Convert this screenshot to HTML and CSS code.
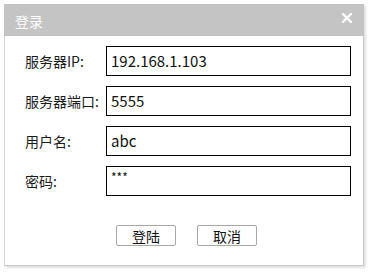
FILE: index.html
```
<!DOCTYPE html>
<html lang="zh-CN">
<head>
<meta charset="utf-8">
<title>登录</title>
<link rel="stylesheet" href="styles.css">
</head>
<body>
<div class="window">
  <div class="titlebar">
    <span class="title">登录</span>
    <span class="close" aria-label="关闭">
      <svg width="10" height="10" viewBox="0 0 10 10"><path d="M1 1 L9 9 M9 1 L1 9" stroke="#ffffff" stroke-width="2.4" stroke-linecap="square"/></svg>
    </span>
  </div>
  <div class="content">
    <div class="form">
      <div class="row"><label class="label">服务器IP:</label><div class="field">192.168.1.103</div></div>
      <div class="row"><label class="label">服务器端口:</label><div class="field">5555</div></div>
      <div class="row"><label class="label">用户名:</label><div class="field">abc</div></div>
      <div class="row"><label class="label">密码:</label><div class="field pwd">***</div></div>
    </div>
    <div class="buttons">
      <button class="btn">登陆</button>
      <button class="btn">取消</button>
    </div>
  </div>
</div>
</body>
</html>
```
FILE: styles.css
```
html, body {
  margin: 0;
  padding: 0;
  background: #ffffff;
  font-family: "Noto Sans CJK SC", "Noto Sans", sans-serif;
}
body {
  padding: 4px 0 0 4px;
  width: 372px;
  height: 272px;
  box-sizing: border-box;
}
.window {
  width: 360px;
  height: 262px;
  box-sizing: border-box;
  border-left: 1px solid #d4d4d4;
  border-right: 1px solid #c8c8c8;
  border-bottom: 1px solid #c8c8c8;
  box-shadow: 2px 2px 2px rgba(0,0,0,0.12);
  background: #ffffff;
  display: flex;
  flex-direction: column;
}
.titlebar {
  height: 32px;
  background: #c4c4c4;
  display: flex;
  align-items: center;
  justify-content: space-between;
  padding: 0 12px 0 11px;
  flex-shrink: 0;
  margin-left: -1px;
  margin-right: -1px;
}
.title {
  color: #ffffff;
  font-size: 14px;
  line-height: 14px;
  margin-top: 1px;
}
.close {
  display: flex;
  width: 10px;
  height: 10px;
  margin-top: -4px;
}
.content {
  padding: 10px 0 0 20px;
}
.form {
  display: flex;
  flex-direction: column;
  gap: 10px;
}
.row {
  display: flex;
  align-items: center;
  height: 30px;
}
.label {
  width: 81px;
  flex-shrink: 0;
  font-size: 14px;
  color: #1a1a1a;
  white-space: nowrap;
}
.field {
  width: 245px;
  height: 30px;
  box-sizing: border-box;
  border: 1px solid #000000;
  font-size: 15px;
  line-height: 28px;
  padding-left: 4px;
  color: #111111;
}
.pwd {
  font-size: 12px;
  line-height: 20px;
}
.buttons {
  display: flex;
  gap: 21px;
  padding-left: 91px;
  margin-top: 29px;
}
.btn {
  width: 60px;
  height: 21px;
  box-sizing: border-box;
  border: 1px solid #a8a8a8;
  border-radius: 2px;
  background: #ffffff;
  font-family: "Noto Sans CJK SC", sans-serif;
  font-size: 14px;
  line-height: 18px;
  padding: 0;
  color: #111111;
}
```
